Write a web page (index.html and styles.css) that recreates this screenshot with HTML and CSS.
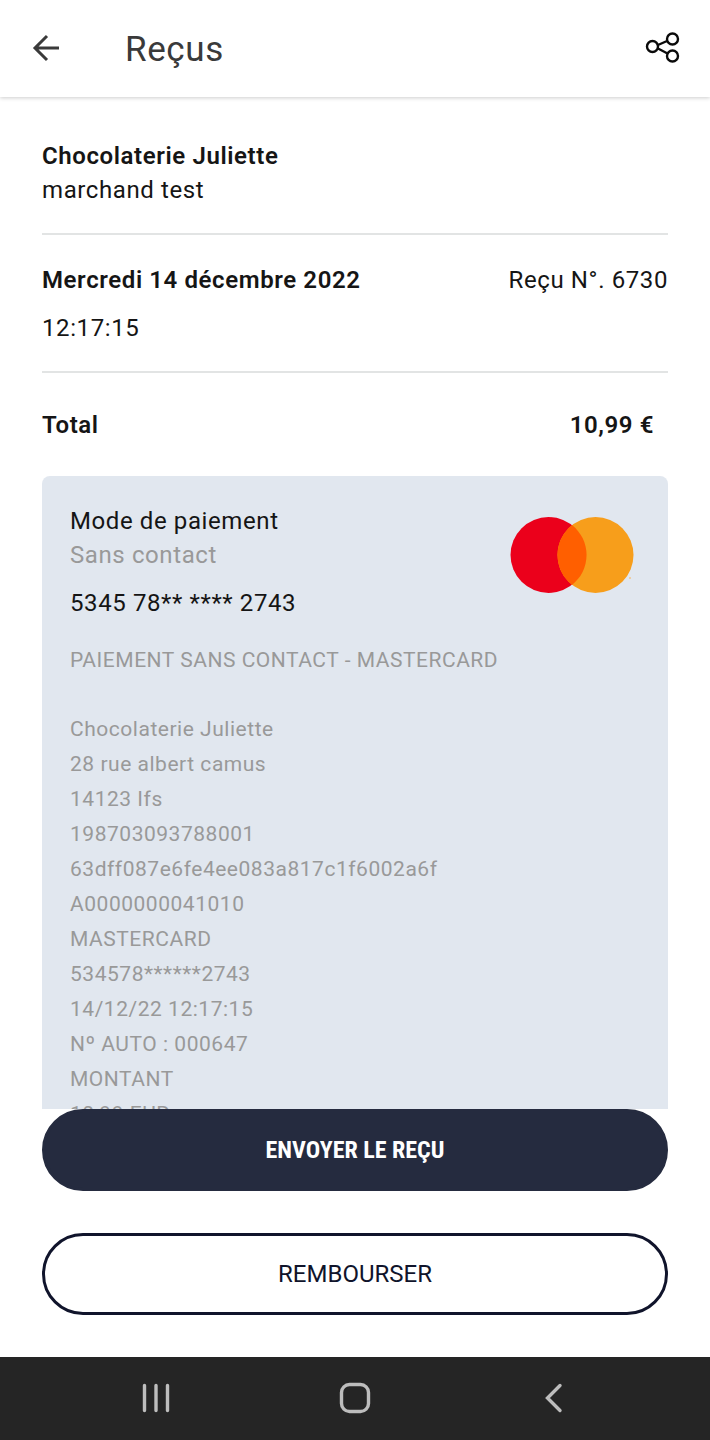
FILE: index.html
```html
<!DOCTYPE html>
<html lang="fr">
  <head>
    <meta charset="UTF-8" />
    <meta name="viewport" content="width=device-width, initial-scale=1.0" />
    <title>Reçus</title>
    <link rel="stylesheet" href="styles.css">
  </head>
  <body>
    <header class="topbar">
      <button type="button" class="icon-button" aria-label="Retour">
        <svg width="30" height="30" viewBox="0 0 30 30" fill="none" stroke="#3a3a3a" stroke-width="3">
          <path d="M28 15H4M16 3L4 15l12 12" />
        </svg>
      </button>
      <h1>Reçus</h1>
      <button type="button" class="icon-button" aria-label="Partager">
        <svg width="36" height="34" viewBox="0 0 36 34" fill="none" stroke="#0a0a0a" stroke-width="2.4">
          <circle cx="8.5" cy="15.5" r="5.5" />
          <circle cx="28.5" cy="8" r="5.5" />
          <circle cx="28.5" cy="25" r="5.5" />
          <path d="M14 14l9-4M14 17.500l9.500 5" />
        </svg>
      </button>
    </header>

    <main class="receipt">
      <section class="merchant">
        <h2>Chocolaterie Juliette</h2>
        <p>marchand test</p>
      </section>

      <section class="info">
        <div class="row">
          <h2>Mercredi 14 décembre 2022</h2>
          <p>Reçu N°. 6730</p>
        </div>
        <p class="time">12:17:15</p>
      </section>

      <section class="row total">
        <h2>Total</h2>
        <strong>10,99 €</strong>
      </section>

      <section class="payment">
        <div class="row">
          <div>
            <p>Mode de paiement</p>
            <p class="muted">Sans contact</p>
            <p class="card-number">5345 78** **** 2743</p>
          </div>
          <svg class="card-logo" width="124" height="78" viewBox="0 0 124 78" role="img" aria-label="Mastercard">
            <circle cx="38.500" cy="39" r="38" fill="#eb001b" />
            <circle cx="85.500" cy="39" r="38" fill="#f79e1b" />
            <path d="M62 9.100a38 38 0 0 1 0 59.800a38 38 0 0 1 0-59.800z" fill="#ff5f00" />
            <circle cx="120" cy="62" r="1" fill="#f0c68c" />
          </svg>
        </div>
        <p class="ticket-title">PAIEMENT SANS CONTACT - MASTERCARD</p>
        <div class="ticket">
          <p>Chocolaterie Juliette</p>
          <p>28 rue albert camus</p>
          <p>14123 Ifs</p>
          <p>198703093788001</p>
          <p>63dff087e6fe4ee083a817c1f6002a6f</p>
          <p>A0000000041010</p>
          <p>MASTERCARD</p>
          <p>534578******2743</p>
          <p>14/12/22 12:17:15</p>
          <p>Nº AUTO : 000647</p>
          <p>MONTANT</p>
          <p>10,99 EUR</p>
        </div>
      </section>
    </main>

    <div class="actions">
      <button type="button" class="btn btn-primary">ENVOYER LE REÇU</button>
      <button type="button" class="btn btn-outline">REMBOURSER</button>
    </div>

    <nav class="navbar">
      <button type="button" class="icon-button" aria-label="Applications récentes">
        <svg width="32" height="32" viewBox="0 0 32 32" fill="none" stroke="#bdbdbd" stroke-width="3.4" stroke-linecap="round">
          <path d="M4.500 3.500v25M16 3.500v25M27.500 3.500v25" />
        </svg>
      </button>
      <button type="button" class="icon-button" aria-label="Accueil">
        <svg width="32" height="32" viewBox="0 0 32 32" fill="none" stroke="#bdbdbd" stroke-width="3.4">
          <rect x="2.500" y="2.500" width="27" height="27" rx="8" />
        </svg>
      </button>
      <button type="button" class="icon-button" aria-label="Précédent">
        <svg width="32" height="32" viewBox="0 0 32 32" fill="none" stroke="#bdbdbd" stroke-width="3.4" stroke-linecap="round">
          <path d="M22 3.500L9.500 16L22 28.500" />
        </svg>
      </button>
    </nav>
  </body>
</html>
```

FILE: styles.css
```css
* {
  box-sizing: border-box;
}

body {
  margin: 0;
  height: 100vh;
  display: flex;
  flex-direction: column;
  font-family: Roboto, "Liberation Sans", sans-serif;
  font-size: 24px;
  line-height: 34px;
  letter-spacing: 0.025em;
  color: #151515;
  background-color: #fff;
}

h1,
h2,
p {
  margin: 0;
}

h2,
strong {
  font-size: 24px;
  font-weight: 600;
}

button {
  font-family: inherit;
  cursor: pointer;
}

.icon-button {
  display: flex;
  padding: 0;
  border: none;
  background: none;
}

.topbar {
  display: flex;
  align-items: center;
  flex-shrink: 0;
  height: 97px;
  padding: 0 30px 2px 31px;
  box-shadow: 0 1px 4px rgba(0, 0, 0, 0.2);
}

.topbar h1 {
  flex: 1;
  padding: 4px 0 0 64px;
  font-size: 35px;
  font-weight: 400;
  line-height: 40px;
  color: #3a3a3a;
}

.receipt {
  flex: 1;
  min-height: 0;
  display: flex;
  flex-direction: column;
  padding: 42px 42px 0;
}

.row {
  display: flex;
  justify-content: space-between;
}

.merchant {
  padding-bottom: 26px;
  border-bottom: 2px solid #e2e4e4;
}

.info {
  padding: 28px 0 26px;
  border-bottom: 2px solid #e2e4e4;
}

.time {
  padding-top: 14px;
}

.total {
  padding: 35px 14px 34px 0;
}

.payment {
  flex: 1;
  min-height: 0;
  overflow-y: auto;
  scrollbar-width: none;
  padding: 28px;
  border-radius: 8px 8px 0 0;
  background-color: #e1e7ef;
}

.muted {
  color: #999;
}

.card-number {
  padding-top: 14px;
}

.card-logo {
  margin: 12px 6px 0 0;
}

.ticket-title,
.ticket {
  font-size: 21px;
  line-height: 35px;
  letter-spacing: 0.025em;
  color: #999;
}

.ticket-title {
  padding: 23px 0 34px;
}

.actions {
  display: flex;
  flex-direction: column;
  gap: 42px;
  padding: 0 42px 42px;
}

.btn {
  height: 82px;
  border: 3px solid #252b3f;
  border-radius: 41px;
  font-size: 24px;
}

.btn-primary {
  color: #fff;
  background-color: #252b3f;
  font-family: "Roboto Condensed", Roboto, "Liberation Sans", sans-serif;
  font-weight: 700;
}

.btn-outline {
  color: #10142b;
  border-color: #10142b;
  background-color: #fff;
  font-weight: 400;
}

.navbar {
  display: flex;
  justify-content: space-around;
  align-items: center;
  flex-shrink: 0;
  height: 83px;
  padding: 0 56px 2px;
  background-color: #252525;
}
```
